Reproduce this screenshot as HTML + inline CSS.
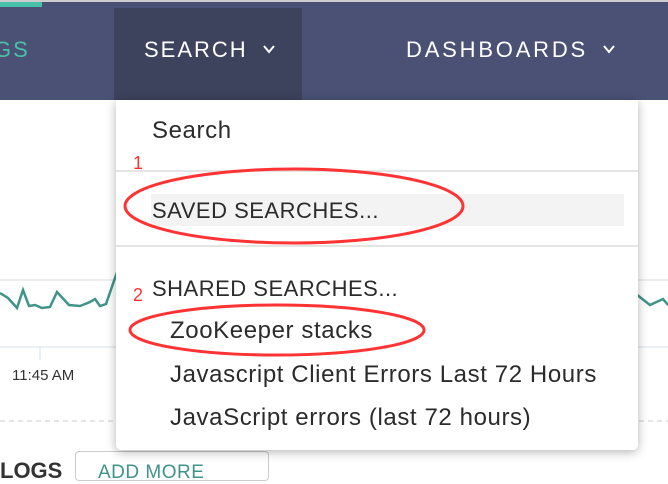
<!DOCTYPE html>
<html><head><meta charset="utf-8"><style>
*{margin:0;padding:0;box-sizing:border-box}
body{width:668px;height:472px;overflow:hidden;background:#fff;font-family:"Liberation Sans",sans-serif;position:relative}
.nav{position:absolute;left:0;top:2px;width:668px;height:98px;background:#4a5175}
.top{position:absolute;left:0;top:0;width:668px;height:2px;background:#ccc}
.teal{position:absolute;left:0;top:2px;width:42px;height:5px;background:#47c1a8}
.act{position:absolute;left:114px;top:8px;width:188px;height:92px;background:#3d425d}
.nt{position:absolute;color:#fff;font-size:22px;top:37px;letter-spacing:2px;white-space:nowrap}
.menu{position:absolute;left:116px;top:100px;width:522px;height:350px;background:#fff;border-radius:0 0 5px 5px;box-shadow:0 2px 10px rgba(0,0,0,.3)}
.t{position:absolute;color:#2b2b2b;font-size:24px;letter-spacing:0.6px;white-space:nowrap}
.sep{position:absolute;left:0;width:522px;height:2px;background:#e4e4e4}
.red{position:absolute;color:#f33;font-size:18px}
</style></head><body>
<div class="top"></div>
<div class="nav"></div>
<div class="teal"></div>
<div class="act"></div>
<div class="nt" style="left:-6px;color:#47c1a8">GS</div>
<div class="nt" style="left:144px">SEARCH</div>
<div class="nt" style="left:406px;letter-spacing:2.8px">DASHBOARDS</div>
<svg width="668" height="100" style="position:absolute;left:0;top:0">
<polyline points="264,46 269,52 274,46" fill="none" stroke="#fff" stroke-width="2"/>
<polyline points="604,46 609,52 614,46" fill="none" stroke="#fff" stroke-width="2"/>
</svg>
<svg width="668" height="472" style="position:absolute;left:0;top:0">
<line x1="0" y1="280" x2="668" y2="280" stroke="#ddd"/>
<line x1="0" y1="347" x2="668" y2="347" stroke="#d6e0ea"/>
<line x1="40" y1="347" x2="40" y2="360" stroke="#d6e0ea"/>
<line x1="0" y1="421" x2="668" y2="421" stroke="#ccc" stroke-dasharray="5,4"/>
<polyline fill="none" stroke="#3f9488" stroke-width="2.5" points="0,293 8,298 17,308 23,290 29,306 35,305 42,308 50,307 57,292 69,305 80,306 90,302 95,299 100,306 106,304 115,278 118,270"/>
<polyline fill="none" stroke="#3f9488" stroke-width="2.5" points="636,294 650,305 663,299 668,305"/>
</svg>
<div class="t" style="left:12px;top:367px;font-size:15px;letter-spacing:0;color:#333">11:45 AM</div>
<div class="t" style="left:0;top:458px;font-size:22px;letter-spacing:0;font-weight:bold;color:#333">LOGS</div>
<div style="position:absolute;left:75px;top:451px;width:194px;height:30px;border:1px solid #ccc;border-radius:4px;background:#fff"></div>
<div class="t" style="left:98px;top:462px;font-size:19px;letter-spacing:0.5px;color:#3f9488">ADD MORE</div>
<div class="menu">
<div class="t" style="left:36px;top:17px">Search</div>
<div class="sep" style="top:70px"></div>
<div style="position:absolute;left:35px;top:94px;width:473px;height:32px;background:#f3f3f3"></div>
<div class="t" style="left:36px;top:98px;font-size:22px;letter-spacing:0.5px">SAVED SEARCHES...</div>
<div class="sep" style="top:145px"></div>
<div class="t" style="left:36px;top:176px;font-size:22px;letter-spacing:0.5px">SHARED SEARCHES...</div>
<div class="t" style="left:54px;top:217px">ZooKeeper stacks</div>
<div class="t" style="left:54px;top:261px">Javascript Client Errors Last 72 Hours</div>
<div class="t" style="left:54px;top:304px">JavaScript errors (last 72 hours)</div>
</div>
<div class="red" style="left:133px;top:153px">1</div>
<div class="red" style="left:133px;top:285px">2</div>
<svg width="668" height="472" style="position:absolute;left:0;top:0">
<ellipse cx="294" cy="206" rx="169" ry="37" fill="none" stroke="#f33" stroke-width="3"/>
<ellipse cx="277" cy="330" rx="147" ry="25" fill="none" stroke="#f33" stroke-width="3"/>
</svg>
</body></html>
